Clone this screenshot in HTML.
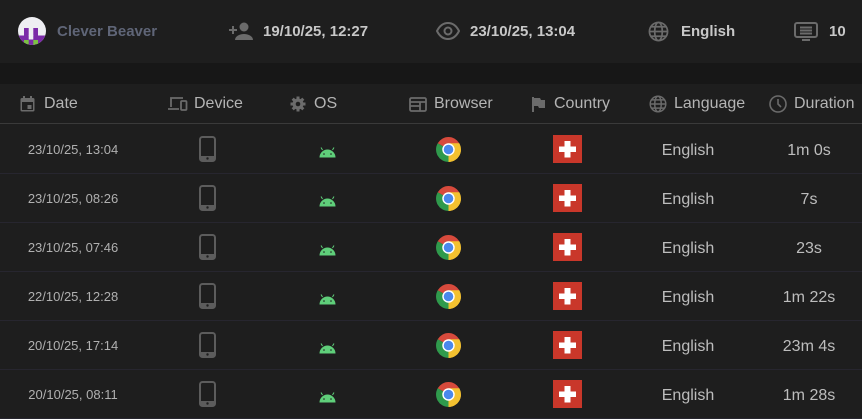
<!DOCTYPE html>
<html><head><meta charset="utf-8"><style>
*{margin:0;padding:0;box-sizing:border-box}
body{width:862px;height:419px;background:#1e1e1e;font-family:"Liberation Sans",sans-serif;overflow:hidden;position:relative;color:#bdbdbd}
.top{position:absolute;left:0;top:0;width:862px;height:63px;background:#1e1e1e}
.gap{position:absolute;left:0;top:63px;width:862px;height:21px;background:#171717}
.ab{position:absolute;white-space:nowrap}
.hb{font-weight:bold;font-size:15px;color:#c8c8c8}
.th{position:absolute;top:84px;height:40px;width:862px;border-bottom:1px solid #3a3a3a}
.th span{position:absolute;top:11px;font-size:16px;color:#b4b4b4}
.row{position:absolute;left:0;width:862px;height:49px;border-bottom:1px solid #27262f}
.c{position:absolute;top:0;height:48px;display:flex;align-items:center;justify-content:center}
</style></head><body>
<div class="top"></div><div class="gap"></div>
<svg class="ab" style="left:18px;top:17px" width="28" height="28" viewBox="0 0 28 28"><defs><clipPath id="cc"><circle cx="14" cy="14" r="14"/></clipPath></defs><g clip-path="url(#cc)"><rect width="28" height="28" fill="#eeeef2"/><rect x="0" y="18.5" width="28" height="10" fill="#7b2aa8"/><rect x="6" y="11" width="4.7" height="8" fill="#7b2aa8"/><rect x="15.3" y="11" width="4.7" height="8" fill="#7b2aa8"/><rect x="10.7" y="18" width="4.6" height="4.5" fill="#eeeef2"/><rect x="6" y="23" width="4.7" height="5" fill="#7cc243"/><rect x="15.3" y="23" width="4.7" height="5" fill="#7cc243"/></g></svg>
<div class="ab" style="left:57px;top:23px;font-size:15px;font-weight:bold;color:#5f6577">Clever Beaver</div>
<svg class="ab" style="left:228px;top:21px" width="26" height="20" viewBox="0 0 26 20" fill="#6b6b6b"><circle cx="16" cy="6" r="4.5"/><path d="M7 19c0-4 5-6 9-6s9 2 9 6z"/><path d="M4 5h2v3h3v2H6v3H4v-3H1V8h3z"/></svg>
<div class="ab hb" style="left:263px;top:23px">19/10/25, 12:27</div>
<svg class="ab" style="left:436px;top:22px" width="24" height="18" viewBox="0 0 24 18" fill="none" stroke="#6b6b6b" stroke-width="2"><path d="M1 9C4 3 8 1 12 1s8 2 11 8c-3 6-7 8-11 8S4 15 1 9z"/><circle cx="12" cy="9" r="3.5"/></svg>
<div class="ab hb" style="left:470px;top:23px">23/10/25, 13:04</div>
<svg class="ab" style="left:648px;top:21px" width="21" height="21" viewBox="0 0 22 22" fill="none" stroke="#6b6b6b" stroke-width="1.8"><circle cx="11" cy="11" r="9.5"/><ellipse cx="11" cy="11" rx="4" ry="9.5"/><path d="M1.5 11h19M3 6h16M3 16h16"/></svg>
<div class="ab hb" style="left:681px;top:23px">English</div>
<svg class="ab" style="left:794px;top:22px" width="24" height="20" viewBox="0 0 24 20" fill="none" stroke="#6b6b6b" stroke-width="2"><rect x="1" y="1" width="22" height="14" rx="2"/><path d="M6 5.5h12M6 8.5h12M6 11.5h12M8 18h8"/></svg>
<div class="ab hb" style="left:829px;top:23px">10</div>

<div class="th">
<svg style="position:absolute;left:20px;top:12px" width="15" height="16" viewBox="0 0 15 16" fill="#6b6b6b"><path d="M2 2h11a1.5 1.5 0 0 1 1.5 1.5V14A1.5 1.5 0 0 1 13 15.5H2A1.5 1.5 0 0 1 .5 14V3.5A1.5 1.5 0 0 1 2 2zm0 4v8h11V6z"/><rect x="3" y="0" width="2" height="3"/><rect x="10" y="0" width="2" height="3"/><rect x="7.5" y="9" width="4" height="4"/></svg>
<span style="left:44px">Date</span>
<svg style="position:absolute;left:168px;top:12px" width="20" height="15" viewBox="0 0 20 15" fill="none" stroke="#6b6b6b" stroke-width="1.8"><path d="M3 11V2h12M0 13h11"/><rect x="13" y="5" width="5.5" height="9" rx="1"/></svg>
<span style="left:194px">Device</span>
<svg style="position:absolute;left:290px;top:12px" width="16" height="16" viewBox="0 0 16 16"><g fill="#6b6b6b"><circle cx="8" cy="8" r="5.5"/><g stroke="#6b6b6b" stroke-width="3"><path d="M8 0.5v15M0.5 8h15M2.7 2.7l10.6 10.6M13.3 2.7L2.7 13.3"/></g></g><circle cx="8" cy="8" r="2.3" fill="#1e1e1e"/></svg>
<span style="left:314px">OS</span>
<svg style="position:absolute;left:409px;top:13px" width="18" height="15" viewBox="0 0 18 15" fill="none" stroke="#6b6b6b" stroke-width="1.8"><rect x="1" y="1" width="16" height="13" rx="1.5"/><path d="M1 5h16M1 9h10M11 5v9" /></svg>
<span style="left:434px">Browser</span>
<svg style="position:absolute;left:531px;top:13px" width="14" height="15" viewBox="0 0 14 15" fill="#6b6b6b"><path d="M1 0h2v15H1zM3 1h6l1 2h4v8H8l-1-2H3z"/></svg>
<span style="left:554px">Country</span>
<svg style="position:absolute;left:649px;top:11px" width="18" height="18" viewBox="0 0 22 22" fill="none" stroke="#6b6b6b" stroke-width="1.8"><circle cx="11" cy="11" r="9.5"/><ellipse cx="11" cy="11" rx="4" ry="9.5"/><path d="M1.5 11h19M3 6h16M3 16h16"/></svg>
<span style="left:674px">Language</span>
<svg style="position:absolute;left:769px;top:11px" width="18" height="18" viewBox="0 0 18 18" fill="none" stroke="#6b6b6b" stroke-width="1.6"><circle cx="9" cy="9" r="8"/><path d="M9 4v5l3 3"/></svg>
<span style="left:794px">Duration</span>
</div>

<div id="rows"></div>
<script>
var d=[["23/10/25, 13:04","1m 0s"],["23/10/25, 08:26","7s"],["23/10/25, 07:46","23s"],["22/10/25, 12:28","1m 22s"],["20/10/25, 17:14","23m 4s"],["20/10/25, 08:11","1m 28s"]];
var h="";
d.forEach(function(r,i){
h+='<div class="row" style="top:'+(125+i*49)+'px">'+
'<div class="c" style="left:0;width:146px;font-size:13px;color:#b0b0b0">'+r[0]+'</div>'+
'<div class="c" style="left:197px;width:20px"><svg width="17" height="26" viewBox="0 0 17 26"><rect x="1" y="1" width="15" height="24" rx="2.5" fill="none" stroke="#5c5c5c" stroke-width="2"/><rect x="1" y="20" width="15" height="5" fill="#5c5c5c"/><circle cx="8.5" cy="22.5" r="1.2" fill="#1e1e1e"/></svg></div>'+
'<div class="c" style="left:317px;width:20px"><svg width="17" height="11" viewBox="0 0 17 11" style="margin-top:6px"><path d="M0.5 10.5a8 8 0 0 1 16 0z" fill="#5fcf7a"/><path d="M3.5 3L2 0.5M13.5 3L15 0.5" stroke="#5fcf7a" stroke-width="1"/><circle cx="5" cy="7" r=".8" fill="#1e1e1e"/><circle cx="12" cy="7" r=".8" fill="#1e1e1e"/></svg></div>'+
'<div class="c" style="left:433px;width:30px"><svg width="27" height="27" viewBox="0 0 26 26"><path d="M13 13L2.6 7A12 12 0 0 1 23.4 7z" fill="#d74a3c"/><path d="M13 13h12A12 12 0 0 1 13 25z" fill="#f3c130"/><path d="M13 13L13 25A12 12 0 0 1 2.6 7z" fill="#2f9a4c"/><path d="M13 7h10.4A12 12 0 0 1 13 25l5.2-9z" fill="#f3c130"/><circle cx="13" cy="13" r="6" fill="#fff"/><circle cx="13" cy="13" r="4.6" fill="#4a88ec"/></svg></div>'+
'<div class="c" style="left:553px;width:29px"><svg width="29" height="28" viewBox="0 0 29 28"><rect width="29" height="28" fill="#c9372a"/><path d="M11.5 6h6v5.5h5.5v5.5h-5.5v5.5h-6V17H6v-5.5h5.5z" fill="#fff"/></svg></div>'+
'<div class="c" style="left:628px;width:120px;font-size:16px;color:#bdbdbd;padding-top:3px">English</div>'+
'<div class="c" style="left:759px;width:100px;font-size:16px;color:#bdbdbd;padding-top:3px">'+r[1]+'</div>'+
'</div>';});
document.getElementById("rows").innerHTML=h;
</script>
</body></html>
